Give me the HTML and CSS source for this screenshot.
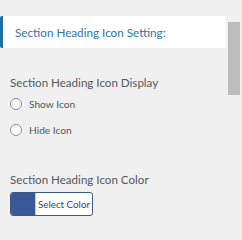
FILE: index.html
```html
<!DOCTYPE html>
<html>
<head>
<meta charset="utf-8">
<link rel="stylesheet" href="styles.css">
</head>
<body>
<div class="page">
  <div class="main">
    <div class="section-head">Section Heading Icon Setting:</div>
    <div class="field">
      <div class="label">Section Heading Icon Display</div>
      <label class="radio"><span class="circle"></span>Show Icon</label>
      <label class="radio"><span class="circle"></span>Hide Icon</label>
    </div>
    <div class="field color-field">
      <div class="label">Section Heading Icon Color</div>
      <button class="color-btn"><span class="swatch"></span><span class="btn-text">Select Color</span></button>
    </div>
  </div>
  <div class="scrollbar"><div class="thumb"></div></div>
</div>
</body>
</html>
```
FILE: styles.css
```css
html, body {
  margin: 0;
  padding: 0;
  background: #f0f0f0;
  width: 242px;
  height: 240px;
  overflow: hidden;
}
.page {
  display: flex;
  font-family: Lato, "Noto Sans", sans-serif;
}
.main {
  width: 226px;
  padding-top: 16px;
}
.section-head {
  height: 32px;
  background: #fff;
  border-left: 3px solid #1e6fa6;
  border-radius: 2px 0 0 2px;
  box-sizing: border-box;
  padding-left: 12px;
  display: flex;
  align-items: center;
  font-size: 11.7px;
  color: #2f74a8;
}
.field {
  padding-left: 10px;
}
.label {
  font-size: 11.6px;
  color: #50575e;
  line-height: 18px;
  margin-top: 26px;
}
.radio {
  display: flex;
  align-items: center;
  font-size: 10.2px;
  color: #50575e;
  height: 26px;
}
.radio:first-of-type {
  margin-top: -1px;
}
.circle {
  width: 10px;
  height: 10px;
  border: 1px solid #8c8f94;
  border-radius: 50%;
  background: #fff;
  margin-right: 7px;
}
.color-field .label {
  margin-top: 28px;
}
.color-btn {
  margin-top: 3px;
  display: flex;
  align-items: stretch;
  width: 83px;
  height: 24px;
  padding: 0;
  border: 1px solid #3c5a80;
  border-radius: 3px;
  background: #fff;
  overflow: hidden;
  font-family: Lato, "Noto Sans", sans-serif;
  box-sizing: border-box;
}
.swatch {
  width: 24px;
  background: #3b5998;
  border-right: 1px solid #c3c4c7;
}
.btn-text {
  flex: 1;
  display: flex;
  align-items: center;
  justify-content: center;
  white-space: nowrap;
  font-size: 9.8px;
  font-weight: 400;
  color: #3c434a;
}
.scrollbar {
  width: 16px;
  padding-top: 22px;
  display: flex;
  justify-content: center;
}
.thumb {
  width: 12px;
  height: 73px;
  background: #bcbcbc;
}
```
